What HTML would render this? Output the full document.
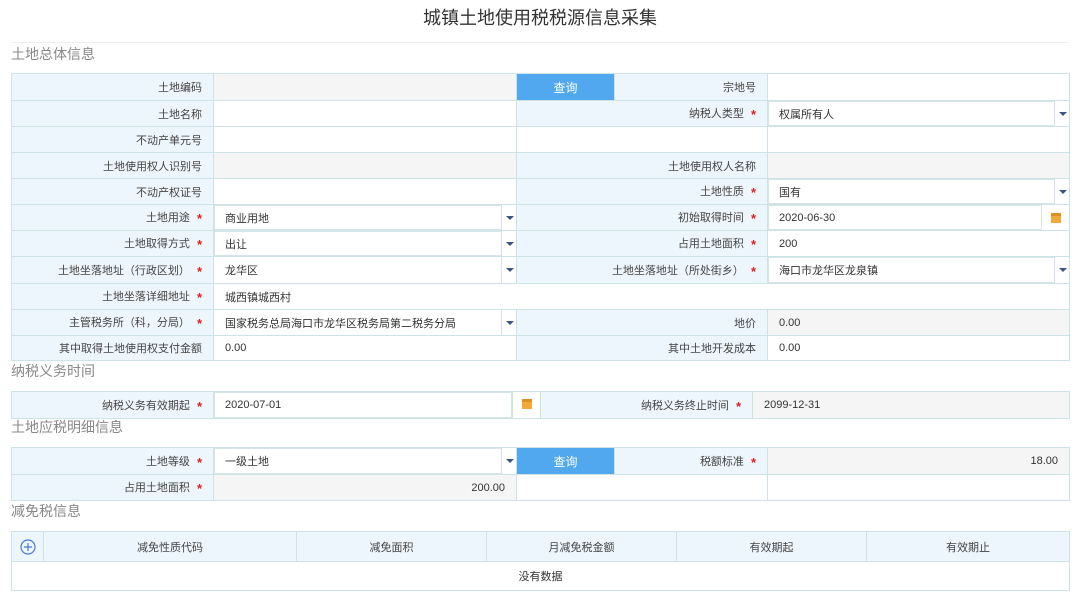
<!DOCTYPE html>
<html><head><meta charset="utf-8"><style>
*{box-sizing:border-box;margin:0;padding:0}
body{width:1080px;height:592px;background:#fff;font-family:"Liberation Sans","Noto Sans CJK SC",sans-serif;color:#333;position:relative;overflow:hidden}
h1{position:absolute;top:4px;left:0;width:1080px;text-align:center;font-size:18px;font-weight:normal;color:#333}
.hr{position:absolute;left:11px;top:42px;width:1058px;height:1px;background:#eee}
.sec{position:absolute;left:11px;font-size:14px;color:#888}
table{position:absolute;left:11px;border-collapse:collapse;table-layout:fixed;font-size:11px}
td{border:1px solid #cde3e5;padding:0;position:relative;white-space:nowrap;overflow:hidden}
td.l{background:#eef6fd;text-align:right;padding-right:11px;color:#444}
td.v{background:#fff;padding-left:11px}
td.d{background:#f5f5f5;padding-left:11px}
.s{color:#e02020;margin-left:7px;font-size:13px;font-weight:bold;vertical-align:-2px}
.btn{background:#52a8ee;color:#fff;text-align:center;font-size:12px}
.ar{position:absolute;right:0;top:0;bottom:0;width:15px;border-left:1px solid #dde;background:#fff}
.ar:after{content:"";position:absolute;left:4px;top:50%;margin-top:-2px;border-left:4px solid transparent;border-right:4px solid transparent;border-top:4px solid #3b5585}
.cb{position:absolute;right:0;top:0;bottom:0;width:28px;border-left:1px solid #e5e5e5;background:#fff;text-align:center;padding-top:8px}
.sel{box-shadow:inset 0 0 0 1px #d6e6e8}
.cal{display:inline-block;width:10px;height:10px;background:#f2a93b;border-top:3px solid #e0901f}
td.c{text-align:center}
</style></head><body>
<h1>城镇土地使用税税源信息采集</h1>
<div class="hr"></div>
<div class="sec" style="top:44px">土地总体信息</div>
<table style="top:73px;width:1058px">
<colgroup><col style="width:202px"><col style="width:303px"><col style="width:98px"><col style="width:153px"><col style="width:302px"></colgroup>
<tr style="height:27px"><td class="l">土地编码</td><td class="d"></td><td class="btn">查询</td><td class="l">宗地号</td><td class="v"></td></tr>
<tr style="height:26px"><td class="l">土地名称</td><td class="v"></td><td class="l" colspan="2">纳税人类型<span class="s">*</span></td><td class="v sel">权属所有人<span class="ar"></span></td></tr>
<tr style="height:26px"><td class="l">不动产单元号</td><td class="v"></td><td class="v" colspan="2"></td><td class="v"></td></tr>
<tr style="height:26px"><td class="l">土地使用权人识别号</td><td class="d"></td><td class="l" colspan="2">土地使用权人名称</td><td class="d"></td></tr>
<tr style="height:26px"><td class="l">不动产权证号</td><td class="v"></td><td class="l" colspan="2">土地性质<span class="s">*</span></td><td class="v sel">国有<span class="ar"></span></td></tr>
<tr style="height:26px"><td class="l">土地用途<span class="s">*</span></td><td class="v sel">商业用地<span class="ar"></span></td><td class="l" colspan="2">初始取得时间<span class="s">*</span></td><td class="v sel">2020-06-30<span class="cb"><span class="cal"></span></span></td></tr>
<tr style="height:26px"><td class="l">土地取得方式<span class="s">*</span></td><td class="v sel">出让<span class="ar"></span></td><td class="l" colspan="2">占用土地面积<span class="s">*</span></td><td class="v">200</td></tr>
<tr style="height:27px"><td class="l">土地坐落地址（行政区划）<span class="s">*</span></td><td class="v">龙华区<span class="ar"></span></td><td class="l" colspan="2">土地坐落地址（所处街乡）<span class="s">*</span></td><td class="v sel">海口市龙华区龙泉镇<span class="ar"></span></td></tr>
<tr style="height:26px"><td class="l">土地坐落详细地址<span class="s">*</span></td><td class="v" colspan="4">城西镇城西村</td></tr>
<tr style="height:26px"><td class="l">主管税务所（科，分局）<span class="s">*</span></td><td class="v">国家税务总局海口市龙华区税务局第二税务分局<span class="ar"></span></td><td class="l" colspan="2">地价</td><td class="d">0.00</td></tr>
<tr style="height:25px"><td class="l">其中取得土地使用权支付金额</td><td class="v">0.00</td><td class="l" colspan="2">其中土地开发成本</td><td class="v">0.00</td></tr>
</table>
<div class="sec" style="top:361px">纳税义务时间</div>
<table style="top:391px;width:1058px">
<colgroup><col style="width:202px"><col style="width:299px"><col style="width:28px"><col style="width:212px"><col style="width:317px"></colgroup>
<tr style="height:27px"><td class="l">纳税义务有效期起<span class="s">*</span></td><td class="v sel">2020-07-01</td><td class="v c" style="padding:0"><span class="cal"></span></td><td class="l">纳税义务终止时间<span class="s">*</span></td><td class="d">2099-12-31</td></tr>
</table>
<div class="sec" style="top:417px">土地应税明细信息</div>
<table style="top:447px;width:1058px">
<colgroup><col style="width:202px"><col style="width:303px"><col style="width:98px"><col style="width:153px"><col style="width:302px"></colgroup>
<tr style="height:27px"><td class="l">土地等级<span class="s">*</span></td><td class="v sel">一级土地<span class="ar"></span></td><td class="btn">查询</td><td class="l">税额标准<span class="s">*</span></td><td class="d" style="text-align:right;padding-right:11px">18.00</td></tr>
<tr style="height:26px"><td class="l">占用土地面积<span class="s">*</span></td><td class="d" style="text-align:right;padding-right:11px">200.00</td><td class="v" colspan="2"></td><td class="v"></td></tr>
</table>
<div class="sec" style="top:501px">减免税信息</div>
<table style="top:531px;width:1058px">
<colgroup><col style="width:32px"><col style="width:253px"><col style="width:190px"><col style="width:190px"><col style="width:190px"><col style="width:203px"></colgroup>
<tr style="height:30px"><td class="l c" style="padding:0"><svg width="16" height="16" viewBox="0 0 16 16" style="vertical-align:middle"><circle cx="8" cy="8" r="7" fill="none" stroke="#4a78d8" stroke-width="1.2"/><path d="M8 4v8M4 8h8" stroke="#4a78d8" stroke-width="1.2"/></svg></td><td class="l c" style="padding:0">减免性质代码</td><td class="l c" style="padding:0">减免面积</td><td class="l c" style="padding:0">月减免税金额</td><td class="l c" style="padding:0">有效期起</td><td class="l c" style="padding:0">有效期止</td></tr>
<tr style="height:29px"><td class="v c" colspan="6" style="padding:0">没有数据</td></tr>
</table>
</body></html>
